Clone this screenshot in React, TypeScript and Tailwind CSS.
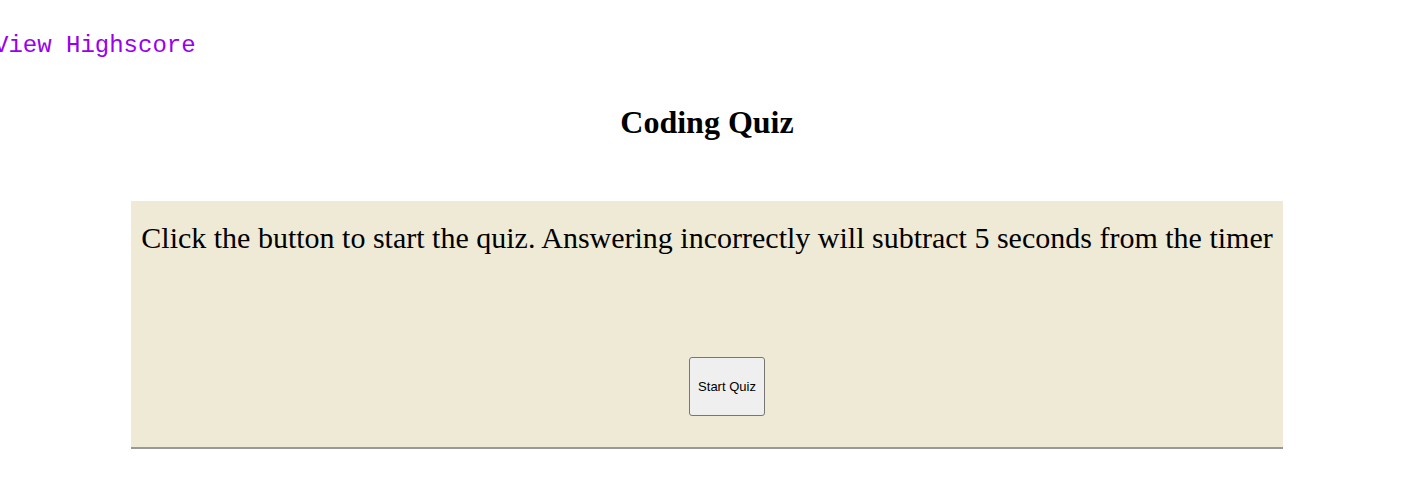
export default function App() {
  return (
    <div className="min-h-[500px] bg-white">
      <div className="w-[1414px]">
        <a
          href="#"
          className="block pt-[32px] -ml-[6px] text-[24px] leading-[28px] text-[#9900ee] font-['Liberation_Mono','Courier_New',monospace]"
        >
          View Highscore
        </a>
        <h1 className="mt-[44px] text-center text-[32px] leading-[36px] font-bold text-black font-['Liberation_Serif','Times_New_Roman',serif]">
          Coding Quiz
        </h1>
        <div className="mx-auto mt-[61px] w-[1152px] bg-[#efead6] border-b-2 border-[#999999] pt-[20px] pb-[31px] flex flex-col items-center">
          <p className="text-center text-[30px] leading-[34px] text-black font-['Liberation_Serif','Times_New_Roman',serif] whitespace-nowrap">
            Click the button to start the quiz. Answering incorrectly will subtract 5 seconds from the timer
          </p>
          <button className="mt-[102px] ml-[40px] w-[76px] h-[59px] bg-[#efefef] border border-[#767676] rounded-[3px] text-[13px] text-black font-['Liberation_Sans',Arial,sans-serif]">
            Start Quiz
          </button>
        </div>
      </div>
    </div>
  );
}
